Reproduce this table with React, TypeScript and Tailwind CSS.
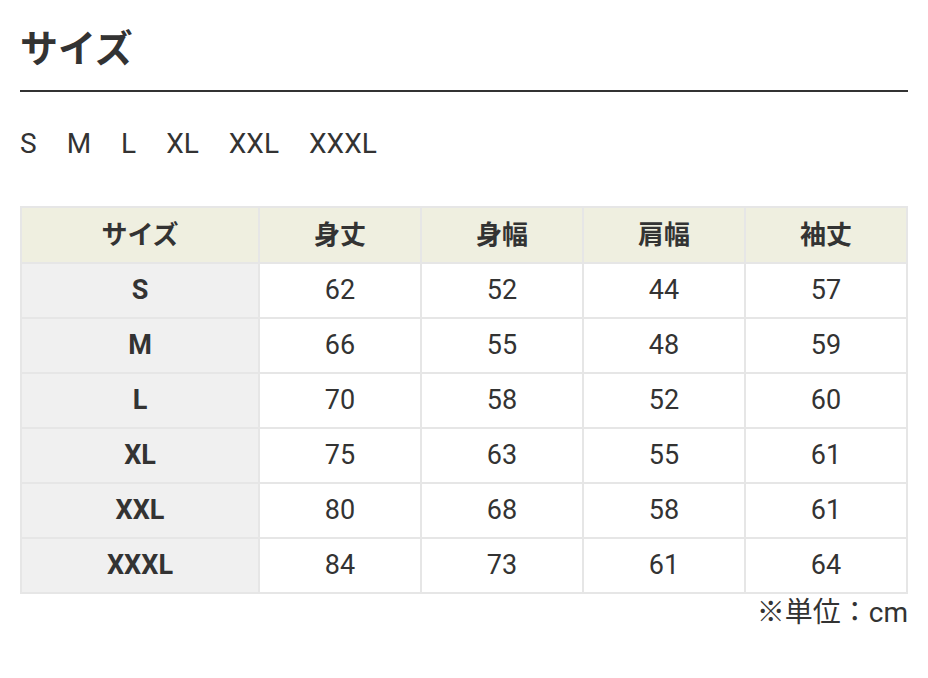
const sizes = ['S', 'M', 'L', 'XL', 'XXL', 'XXXL'];

const heads = ['サイズ', '身丈', '身幅', '肩幅', '袖丈'];

const rows: [string, number, number, number, number][] = [
  ['S', 62, 52, 44, 57],
  ['M', 66, 55, 48, 59],
  ['L', 70, 58, 52, 60],
  ['XL', 75, 63, 55, 61],
  ['XXL', 80, 68, 58, 61],
  ['XXXL', 84, 73, 61, 64],
];

export default function App() {
  return (
    <main
      className="min-h-[678px] w-full bg-white px-5 pt-[26px] text-[#333]"
      style={{ fontFamily: 'Roboto, "Noto Sans CJK JP", sans-serif' }}
    >
      <h2 className="border-b-2 border-[#333] pb-[18px] text-[38px] font-bold leading-[46px]">
        サイズ
      </h2>

      <div className="mt-[36px] flex gap-[30px] text-[28px] leading-[32px]">
        {sizes.map((s) => (
          <span key={s}>{s}</span>
        ))}
      </div>

      <table className="mt-[46px] w-full table-fixed border-collapse border border-[#e3e3e3] text-[27px]">
        <colgroup>
          <col className="w-[238px]" />
          <col />
          <col />
          <col />
          <col />
        </colgroup>
        <thead>
          <tr className="h-[56px] bg-[#efefe0]">
            {heads.map((h) => (
              <th key={h} className="border-2 border-[#e6e6e6] text-center text-[26px] font-bold">
                {h}
              </th>
            ))}
          </tr>
        </thead>
        <tbody>
          {rows.map(([size, ...vals]) => (
            <tr key={size} className="h-[55px]">
              <td className="border-2 border-[#e6e6e6] bg-[#f0f0f0] text-center font-bold">
                {size}
              </td>
              {vals.map((v, i) => (
                <td key={i} className="border-2 border-[#e6e6e6] text-center">
                  {v}
                </td>
              ))}
            </tr>
          ))}
        </tbody>
      </table>

      <p className="mt-[2px] text-right text-[28px] leading-[34px]">※単位：cm</p>
    </main>
  );
}
